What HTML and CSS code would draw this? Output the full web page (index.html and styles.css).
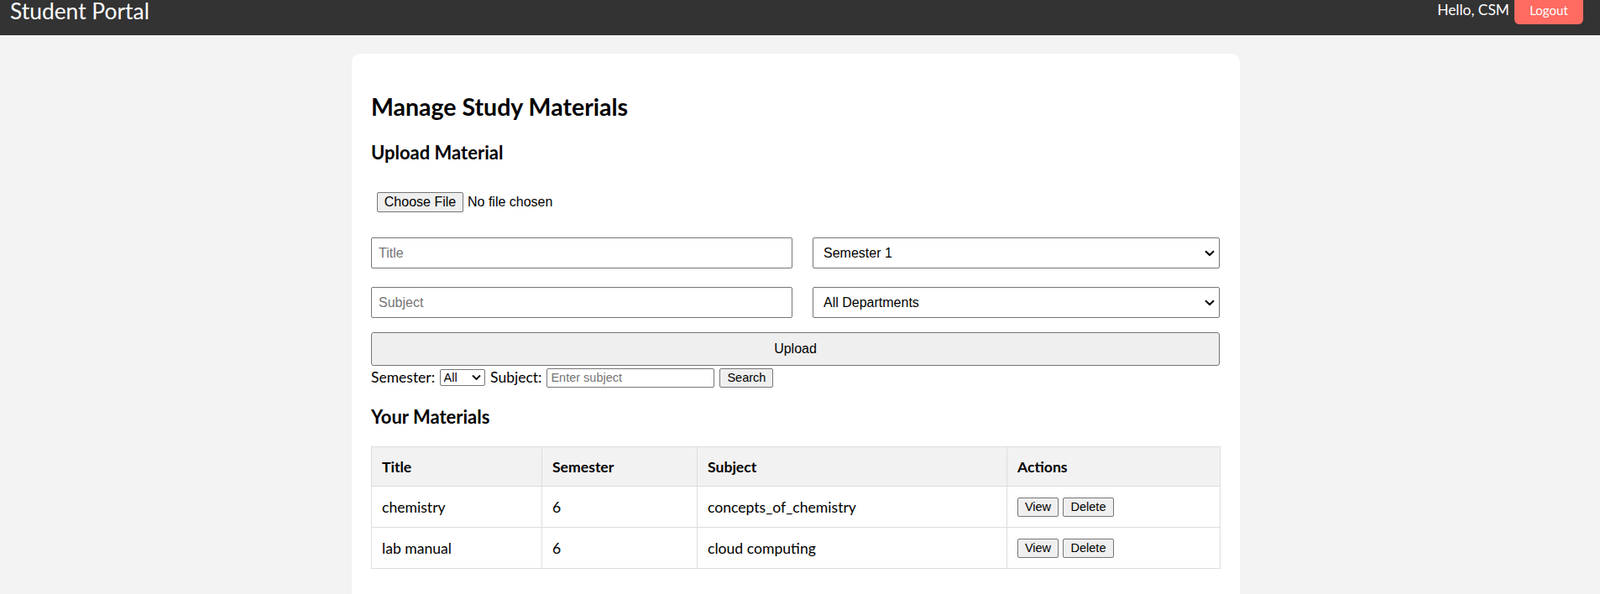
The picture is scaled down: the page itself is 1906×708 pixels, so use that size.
FILE: index.html
```html
<!DOCTYPE html>
<html lang="en">
<head>
<meta charset="utf-8">
<title>Student Portal</title>
<link rel="stylesheet" href="styles.css">
</head>
<body>
<header class="topbar">
  <h1 class="brand">Student Portal</h1>
  <div class="user">
    <span class="hello">Hello, CSM</span>
    <button class="logout" type="button">Logout</button>
  </div>
</header>

<main class="card">
  <h2 class="page-title">Manage Study Materials</h2>

  <h3 class="section-title">Upload Material</h3>
  <form class="upload-form">
    <div class="file-row">
      <input class="file-input" type="file">
    </div>
    <div class="field-grid">
      <input class="text-field" type="text" placeholder="Title">
      <div class="select-wrap">
        <select class="select-field">
          <option>Semester 1</option>
        </select>
        <svg class="chevron" width="12" height="8" viewBox="0 0 12 8" aria-hidden="true"><polyline points="1,1.2 6,6 11,1.2" fill="none" stroke="#000" stroke-width="2"/></svg>
      </div>
      <input class="text-field" type="text" placeholder="Subject">
      <div class="select-wrap">
        <select class="select-field">
          <option>All Departments</option>
        </select>
        <svg class="chevron" width="12" height="8" viewBox="0 0 12 8" aria-hidden="true"><polyline points="1,1.2 6,6 11,1.2" fill="none" stroke="#000" stroke-width="2"/></svg>
      </div>
    </div>
    <button class="upload-btn" type="button">Upload</button>
  </form>

  <div class="search-row">
    <label class="search-label">Semester:</label>
    <div class="select-wrap mini-wrap">
      <select class="mini-select">
        <option>All</option>
      </select>
      <svg class="chevron mini-chevron" width="11" height="7" viewBox="0 0 11 7" aria-hidden="true"><polyline points="1,1 5.5,5.5 10,1" fill="none" stroke="#000" stroke-width="1.8"/></svg>
    </div>
    <label class="search-label">Subject:</label>
    <input class="mini-input" type="text" placeholder="Enter subject">
    <button class="mini-btn search-btn" type="button">Search</button>
  </div>

  <h3 class="section-title materials-title">Your Materials</h3>
  <table class="materials">
    <colgroup>
      <col class="c-title">
      <col class="c-sem">
      <col class="c-subj">
      <col class="c-act">
    </colgroup>
    <thead>
      <tr><th>Title</th><th>Semester</th><th>Subject</th><th>Actions</th></tr>
    </thead>
    <tbody>
      <tr>
        <td>chemistry</td><td>6</td><td>concepts_of_chemistry</td>
        <td><div class="actions"><button class="mini-btn view-btn" type="button">View</button><button class="mini-btn del-btn" type="button">Delete</button></div></td>
      </tr>
      <tr>
        <td>lab manual</td><td>6</td><td>cloud computing</td>
        <td><div class="actions"><button class="mini-btn view-btn" type="button">View</button><button class="mini-btn del-btn" type="button">Delete</button></div></td>
      </tr>
    </tbody>
  </table>
</main>
</body>
</html>
```
FILE: styles.css
```css
* { box-sizing: border-box; }

html, body {
  margin: 0;
  padding: 0;
}

body {
  background: #f3f3f3;
  font-family: "Lato", "Open Sans", sans-serif;
  font-size: 17.6px;
  color: #000;
}

/* ---------- top bar ---------- */
.topbar {
  height: 42px;
  background: #333333;
  color: #fff;
  display: flex;
  justify-content: space-between;
  align-items: flex-start;
  padding: 0 20px 0 12px;
}

.brand {
  margin: 0;
  font-size: 26.4px;
  font-weight: 400;
  line-height: 26px;
}

.user {
  display: flex;
  align-items: flex-start;
  gap: 6px;
}

.hello {
  font-size: 17.4px;
  line-height: 23px;
}

.logout {
  margin-top: -5px;
  height: 34px;
  width: 82px;
  border: none;
  border-radius: 6px;
  background: #ff6b61;
  color: #fff;
  font-family: "Lato", "Open Sans", sans-serif;
  font-size: 15px;
  padding: 0;
}

/* ---------- card ---------- */
.card {
  width: 1058px;
  min-height: 644px;
  margin: 22px 0 0 419px;
  background: #fff;
  border-radius: 10px 10px 0 0;
  padding: 46px 24px 23px 23px;
}

.page-title {
  margin: 0;
  font-size: 28.5px;
  font-weight: 700;
  line-height: 34px;
}

.section-title {
  margin: 23.5px 0 0;
  font-size: 22px;
  font-weight: 700;
  line-height: 28px;
}

/* ---------- upload form ---------- */
.upload-form {
  margin: 0;
}

.file-row {
  margin-top: 33.5px;
  padding-left: 7px;
  height: 24px;
  display: flex;
  align-items: center;
}

.file-input {
  font-family: "Liberation Sans", Arial, sans-serif;
  font-size: 16px;
  color: #000;
  height: 24px;
}

.file-input::file-selector-button {
  height: 24px;
  width: 103px;
  padding: 0;
  margin-right: 5px;
  border: 1px solid #767676;
  border-radius: 2px;
  background: #efefef;
  color: #000;
  font-family: "Liberation Sans", Arial, sans-serif;
  font-size: 16px;
}

.field-grid {
  margin-top: 30px;
  display: grid;
  grid-template-columns: 502px 485px;
  column-gap: 24px;
  row-gap: 22px;
}

.select-wrap {
  position: relative;
  display: flex;
}

.text-field,
.select-field {
  height: 37px;
  border: 1px solid #767676;
  border-radius: 2px;
  background: #fff;
  font-family: "Liberation Sans", Arial, sans-serif;
  font-size: 16px;
  color: #000;
  margin: 0;
}

.text-field {
  padding: 0 8px;
}

.select-field {
  width: 100%;
  appearance: none;
  -webkit-appearance: none;
  padding: 0 30px 0 12px;
}

.chevron {
  position: absolute;
  right: 6px;
  top: 50%;
  transform: translateY(-50%);
  pointer-events: none;
}

.text-field::placeholder,
.mini-input::placeholder {
  color: #757575;
}

.upload-btn {
  display: block;
  width: 100%;
  height: 40px;
  margin-top: 17px;
  border: 1px solid #767676;
  border-radius: 3px;
  background: #efefef;
  font-family: "Liberation Sans", Arial, sans-serif;
  font-size: 16px;
  color: #000;
}

/* ---------- search row ---------- */
.search-row {
  margin-top: 2px;
  height: 24px;
  display: flex;
  align-items: center;
  gap: 6px;
}

.search-label {
  font-size: 17.5px;
  line-height: 22px;
}

.mini-wrap {
  width: 54px;
}

.mini-select {
  width: 54px;
  height: 20px;
  appearance: none;
  -webkit-appearance: none;
  padding: 0 16px 0 3.5px;
  border: 1px solid #767676;
  border-radius: 2px;
  background: #fff;
  font-family: "Liberation Sans", Arial, sans-serif;
  font-size: 14.5px;
  color: #000;
}

.mini-chevron {
  right: 5px;
}

.mini-input {
  width: 200px;
  height: 23px;
  padding: 0 4px;
  border: 1px solid #767676;
  border-radius: 2px;
  font-family: "Liberation Sans", Arial, sans-serif;
  font-size: 14.5px;
}

.mini-btn {
  height: 23px;
  padding: 0;
  border: 1px solid #767676;
  border-radius: 2px;
  background: #efefef;
  font-family: "Liberation Sans", Arial, sans-serif;
  font-size: 14.5px;
  color: #000;
}

.search-btn { width: 64px; }

/* ---------- table ---------- */
.materials-title {
  margin-top: 21px;
}

.materials {
  margin-top: 21px;
  width: 1011px;
  border-collapse: collapse;
  table-layout: fixed;
}

.c-title { width: 203px; }
.c-sem { width: 185px; }
.c-subj { width: 369px; }
.c-act { width: 254px; }

.materials th,
.materials td {
  border: 1px solid #dddddd;
  padding: 0 12px;
  text-align: left;
  vertical-align: middle;
  font-size: 17.6px;
}

.materials th {
  height: 47px;
  background: #f2f2f2;
  font-weight: 700;
}

.materials td {
  height: 49px;
}

.actions {
  display: flex;
  gap: 5px;
}

.view-btn { width: 49px; }
.del-btn { width: 61px; }
```
